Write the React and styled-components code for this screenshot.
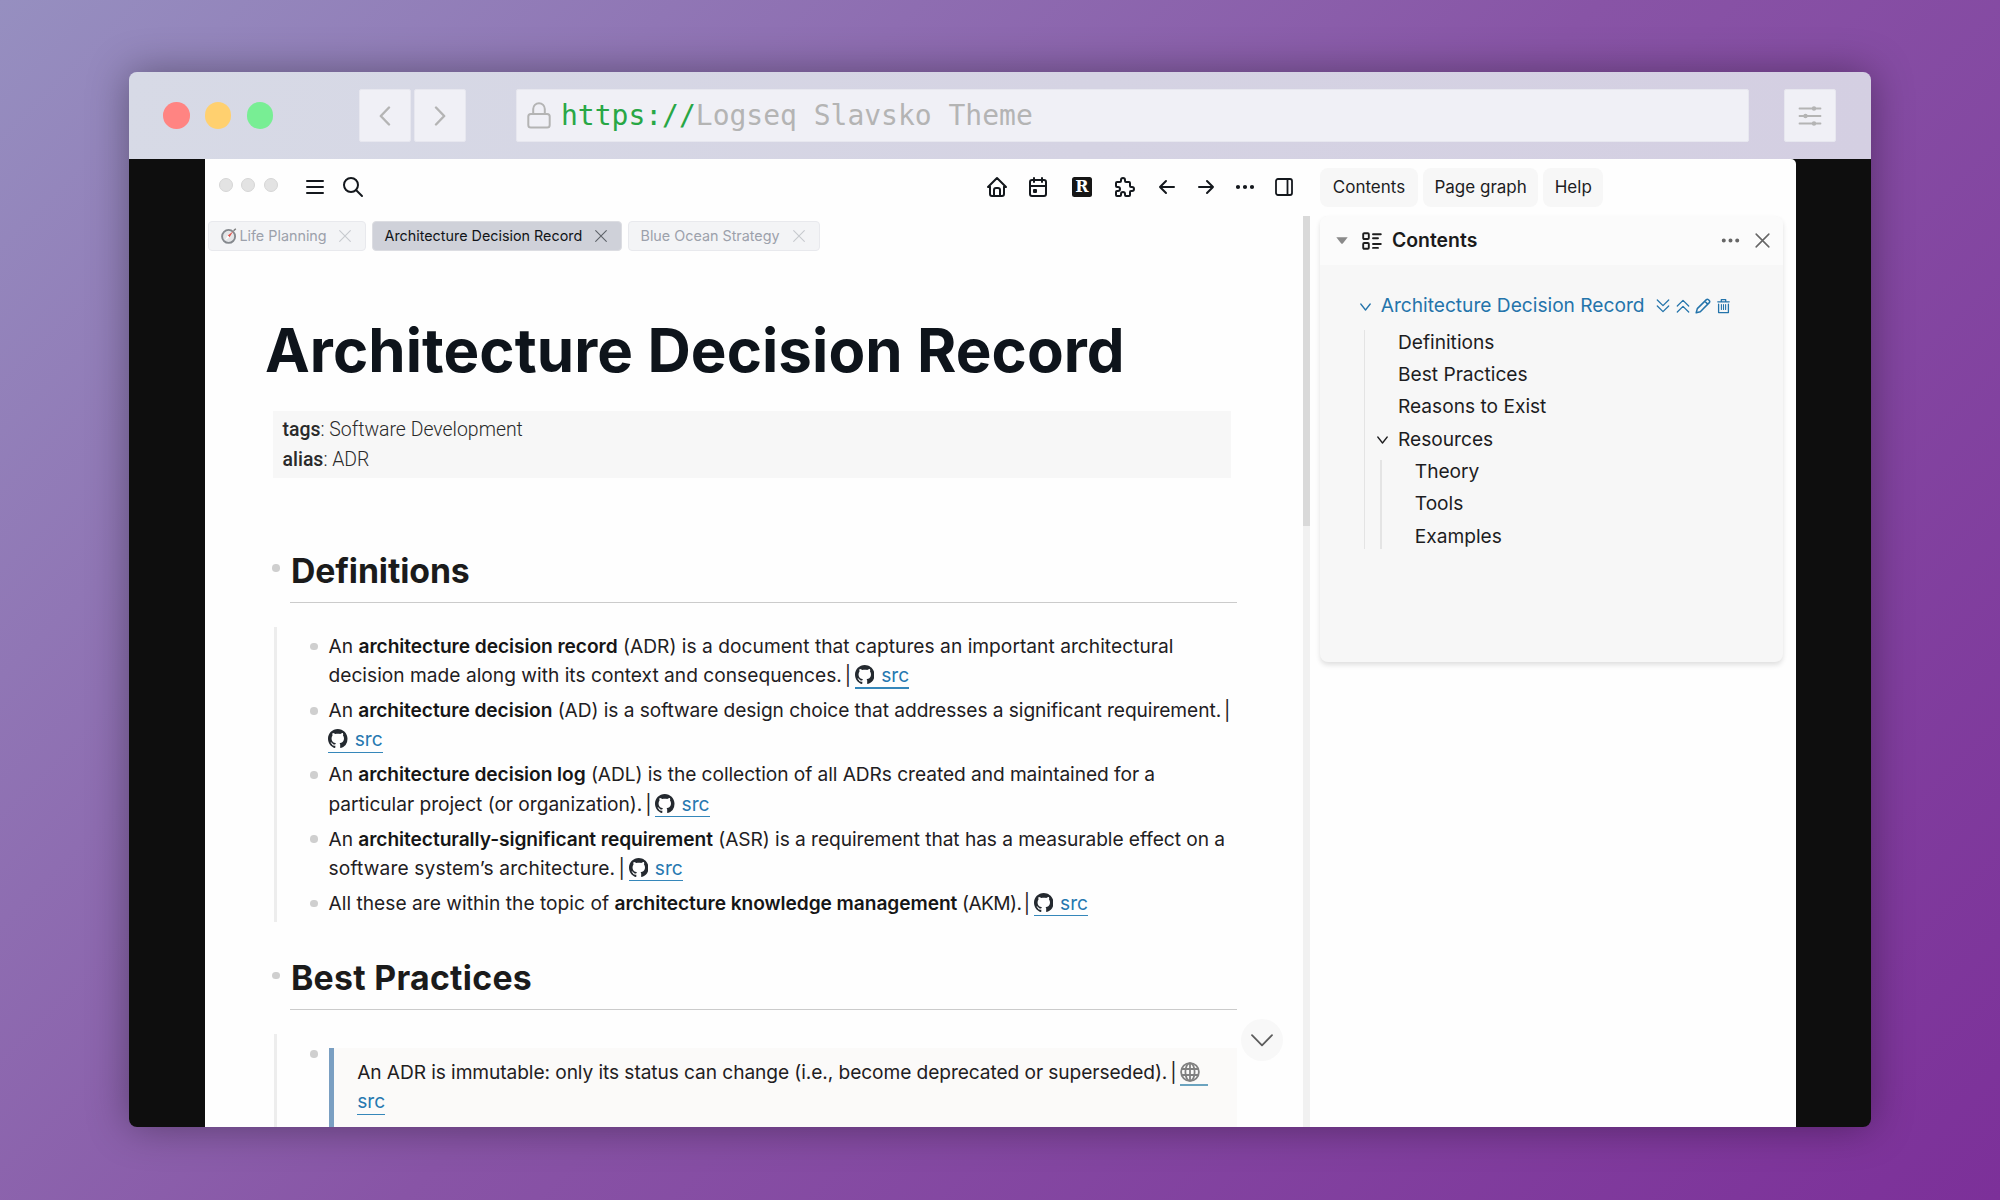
import React from "react";
import styled, { createGlobalStyle } from "styled-components";

const Global = createGlobalStyle`
  * { box-sizing: border-box; }
  html, body { margin: 0; }
  body {
    width: 2000px; height: 1200px; overflow: hidden;
    font-family: Inter, "Liberation Sans", sans-serif;
    color: #1d1d1f;
  }
  svg { display: block; flex: none; }
`;

/* ---------- desktop and browser frame ---------- */
const Desktop = styled.div`
  width: 2000px; height: 1200px;
  padding: 72px 129px 73px;
  background: linear-gradient(135deg, #968fc0 0%, #8854a6 50%, #7c3099 100%);
`;
const BrowserWindow = styled.div`
  height: 1055px;
  display: flex; flex-direction: column;
  border-radius: 8px;
  overflow: hidden;
  box-shadow: 0 0 40px rgba(0, 0, 0, 0.36);
`;
const Chrome = styled.div`
  height: 87px; flex: none;
  display: flex; align-items: center;
  padding: 0 35px 0 34px;
  background: linear-gradient(100deg, #d7dae6, #d5d3e3 55%, #d4cfe2);
`;
const Lights = styled.div`display: flex; gap: 15.4px; width: 196px;`;
const Light = styled.span`
  width: 26.5px; height: 26.5px; border-radius: 50%;
  background: ${(p) => p.$color};
`;
const ChromeBox = styled.div`
  height: 53px; width: 52px;
  display: flex; align-items: center; justify-content: center;
  border-radius: 2px;
  background: #f0f0f6;
  border: 1px solid #e7e7ef;
`;
const NavButtons = styled.div`display: flex; gap: 3px;`;
const Address = styled(ChromeBox)`
  flex: 1; width: auto; justify-content: flex-start;
  margin: 0 35px 0 50px; padding: 0 0 0 9.5px;
  font: 28px "DejaVu Sans Mono", monospace;
  letter-spacing: -0.01px;
  color: #b4b4b4;
  svg { margin-right: 10.5px; }
`;
const Scheme = styled.span`color: #28a745;`;

const Stage = styled.div`
  flex: 1; min-height: 0;
  display: flex;
  padding: 0 75px 0 76px;
  background: #0e0e0e;
`;
const AppWindow = styled.div`
  flex: 1; display: flex; overflow: hidden;
  background: #fefefe;
  border-top-right-radius: 5px;
`;

/* ---------- main pane ---------- */
const Main = styled.div`width: 1105px; flex: none; display: flex; flex-direction: column;`;
const Toolbar = styled.div`
  height: 57px; flex: none;
  display: flex; align-items: center;
  padding: 0 7px 1.4px 14px;
  color: #14181d;
`;
const MacDots = styled.div`display: flex; gap: 8.4px; margin: -3.6px 17.4px 0 0;`;
const MacDot = styled.span`
  width: 14px; height: 14px; border-radius: 50%;
  background: #e3e3e3; border: 1px solid #d6d6d6;
`;
const ToolButton = styled.span`
  width: ${(p) => p.$w || 38.8}px; height: 38px;
  display: flex; align-items: center; justify-content: center;
`;
const Spacer = styled.span`flex: 1;`;
const Readwise = styled.span`
  width: 20px; height: 20px; border-radius: 2.5px;
  background: #161616; color: #fff;
  font: bold 16px/20px "DejaVu Serif", serif;
  text-align: center;
`;
const Scroller = styled.div`flex: 1; display: flex; min-height: 0;`;
const Page = styled.div`flex: 1; min-width: 0; padding-top: 5px; overflow: hidden; position: relative;`;
const Track = styled.div`width: 7.5px; flex: none; background: #f1f1f1;`;
const Thumb = styled.div`height: 310px; background: #d9d9d9;`;

const Tabs = styled.div`display: flex; gap: 5.5px; padding-left: 3px; height: 29.5px;`;
const Tab = styled.div`
  width: ${(p) => p.$w}px; height: 29.5px;
  display: flex; align-items: center; justify-content: space-between;
  padding: 0 12.5px 0 ${(p) => p.$pl || 12}px;
  border-radius: 4px;
  border: 1.5px solid ${(p) => (p.$active ? "#dcdde2" : "#e8e9ed")};
  background: ${(p) => (p.$active ? "#cfd1d9" : "#f3f4f6")};
  color: ${(p) => (p.$active ? "#111418" : "#9ca1ab")};
  font-size: 14.35px; white-space: nowrap;
  svg.close { color: ${(p) => (p.$active ? "#5d6168" : "#c6c9ce")}; }
`;
const TabLabel = styled.span`display: flex; align-items: center; gap: 2.8px;`;

const Title = styled.h1`
  margin: 63.5px 0 0 60px;
  font-size: 60px; line-height: 72px; font-weight: 700;
  letter-spacing: 0.08px;
  color: #0e141b; white-space: nowrap;
`;
const Properties = styled.div`
  margin: 24.8px 0 71.2px 68px; width: 958px; height: 67px;
  padding: 4.7px 9.5px;
  background: #f7f7f7;
  font: 300 19.45px/29.5px Roboto, sans-serif;
  color: #2a2a2a;
  b { font-weight: 500; }
`;
const Section = styled.section`width: 963px; margin-left: 69px;`;
const HeadingRow = styled.div`display: flex;`;
const Bullet = styled.span`
  width: 7.6px; height: 7.6px; border-radius: 50%; flex: none;
  background: #cfcfcf;
  margin: ${(p) => p.$mt}px ${(p) => p.$mr}px 0 ${(p) => p.$ml || 0}px;
`;
const Heading = styled.h2`
  flex: 1; margin: 0; height: 54px;
  padding: 1px 0 0 0.8px;
  font-size: 33.8px; line-height: 42px; font-weight: 700;
  letter-spacing: ${(p) => p.$track || 0}px;
  color: #1b1b1b;
  border-bottom: 1px solid #cbcbcb;
`;
const Children = styled.div`
  margin: 24px 0 34.5px 0.4px;
  padding: ${(p) => p.$pt || 5.1}px 0 3.6px 33px;
  border-left: 3px solid #ededed;
  display: flex; flex-direction: column; gap: 5.8px;
`;
const Block = styled.div`display: flex;`;
const Para = styled.p`
  margin: 0; white-space: nowrap;
  font-size: 19.15px; line-height: 29.2px;
  color: #1f2022;
  b { font-weight: 600; letter-spacing: -0.05px; color: #161616; }
`;
const Run = styled.span`letter-spacing: ${(p) => p.$track}px;`;
const Divider = styled.span`letter-spacing: -0.8px; margin-left: -2.4px;`;
const SourceLink = styled.a`
  display: inline-block; position: relative;
  height: 29.2px; padding-left: ${(p) => (p.$icon ? 26.2 : 0)}px;
  color: #2678b0;
  vertical-align: top;
  &::after {
    content: ""; position: absolute; left: 0; right: 0; bottom: 1.6px;
    height: 1.4px; background: #3587ba;
  }
  svg { position: absolute; left: 0; top: 3.9px; }
`;
const GlobeLink = styled(SourceLink)`
  width: 28px; padding: 0;
  &::after { background: #6ba3bf; }
`;
const Quote = styled.blockquote`
  flex: 1; margin: 0; height: 110px;
  padding: 9.8px 0 0 23px;
  border-left: 5px solid #7a9fc2;
  background: #fbfaf9;
`;
const ScrollDown = styled.div`
  position: absolute; left: 1036px; top: 803px;
  width: 42px; height: 42px; border-radius: 50%;
  display: flex; align-items: center; justify-content: center;
  background: #f8f8f8; color: #5c5c5c;
`;

/* ---------- right sidebar ---------- */
const Sidebar = styled.aside`flex: 1; padding: 0 13px 0 10px;`;
const SidebarNav = styled.div`display: flex; gap: 5.3px; padding: 9px 0 0; height: 57px;`;
const NavPill = styled.span`
  height: 38.7px; width: ${(p) => p.$w}px; border-radius: 8px;
  background: #f7f7f7;
  font-size: 17px; line-height: 38.7px; text-align: center;
`;
const Card = styled.div`
  height: 446px; border-radius: 8px; overflow: hidden;
  background: #f7f7f7;
  box-shadow: 0 3px 5px rgba(0, 0, 0, 0.12);
`;
const CardHeader = styled.div`
  height: 49px; display: flex; align-items: center;
  padding: 0 11px 1px 16px;
  background: #fbfbfb; color: #666;
`;
const HeaderTools = styled.span`display: flex; align-items: center; gap: 11px;`;
const HeaderMark = styled.span`margin: 1px 9.5px 0 14px;`;
const CardTitle = styled.span`
  flex: 1; margin-left: 0.5px;
  font-size: 19.4px; font-weight: 600; color: #1a1a1a;
`;
const Tree = styled.div`padding: 24px 0 0 38px; font-size: 19.15px; line-height: 32.4px;`;
const TreeRoot = styled.div`
  height: 36.5px; display: flex; align-items: flex-start;
  padding-left: 2.3px;
  color: #2474ab;
`;
const TreeActions = styled.span`display: flex; gap: 4px; margin-left: 10px; padding-top: 8.5px;`;
const TreeRow = styled.div`
  height: 32.4px; display: flex;
  padding-left: ${(p) => p.$indent || 0}px;
`;
const Caret = styled.span`width: ${(p) => p.$w}px; padding-top: 13.6px; flex: none;`;
const Branch = styled.div`
  margin-left: ${(p) => p.$ml}px;
  display: flex;
`;
const Guide = styled.span`
  width: 1.4px; margin: 4.5px 0 3.5px; flex: none; background: #e4e4e4;
`;

/* ---------- icons ---------- */
const Icon = ({ size = 24, sw = 2, children, ...rest }) => (
  <svg width={size} height={size} viewBox="0 0 24 24" fill="none" stroke="currentColor"
    strokeWidth={sw} strokeLinecap="round" strokeLinejoin="round" {...rest}>{children}</svg>
);
const Cross = ({ size = 18, sw = 1.6 }) => (
  <Icon size={size} sw={sw} className="close"><path d="M4 4L20 20M20 4L4 20" /></Icon>
);
const Dots = ({ size = 24 }) => (
  <Icon size={size}>
    {[5, 12, 19].map((x) => <circle key={x} cx={x} cy="12" r="1.1" fill="currentColor" />)}
  </Icon>
);
const Chevron = () => (
  <svg width="11" height="8" viewBox="0 0 11 8" fill="none" stroke="currentColor" strokeWidth="1.3"
    strokeLinecap="round" strokeLinejoin="round"><path d="M.8 1L5.5 7L10.2 1" /></svg>
);
const ListMark = () => (
  <svg width="20" height="18" viewBox="0 0 20 18" fill="none" stroke="#1f1f1f" strokeWidth="1.9" strokeLinecap="round">
    <rect x="1.2" y="1.2" width="5.6" height="5.8" rx="1" />
    <rect x="1.2" y="11" width="5.6" height="5.8" rx="1" />
    <path d="M11 2.3H18.8M11 6.2H16M11 12H18.8M11 15.9H16" />
  </svg>
);
const GitHub = () => (
  <svg width="19.5" height="19.5" viewBox="0 0 16 16" fill="#24292f">
    <path d="M8 0C3.58 0 0 3.58 0 8c0 3.54 2.29 6.53 5.47 7.59.4.07.55-.17.55-.38 0-.19-.01-.82-.01-1.49-2.01.37-2.53-.49-2.69-.94-.09-.23-.48-.94-.82-1.13-.28-.15-.68-.52-.01-.53.63-.01 1.08.58 1.23.82.72 1.21 1.87.87 2.33.66.07-.52.28-.87.51-1.07-1.78-.2-3.64-.89-3.64-3.95 0-.87.31-1.59.82-2.15-.08-.2-.36-1.02.08-2.12 0 0 .67-.21 2.2.82.64-.18 1.32-.27 2-.27.68 0 1.36.09 2 .27 1.53-1.04 2.2-.82 2.2-.82.44 1.1.16 1.92.08 2.12.51.56.82 1.27.82 2.15 0 3.07-1.87 3.75-3.65 3.95.29.25.54.73.54 1.48 0 1.07-.01 1.93-.01 2.2 0 .21.15.46.55.38A8.013 8.013 0 0016 8c0-4.42-3.58-8-8-8z" />
  </svg>
);
const Globe = () => (
  <svg width="20" height="20" viewBox="0 0 20 20" fill="none" stroke="#808080" strokeWidth="1.8">
    <circle cx="10" cy="10" r="8.9" />
    <ellipse cx="10" cy="10" rx="4.6" ry="8.9" />
    <path d="M10 1V19M1.8 7H18.2M1.8 13H18.2" />
  </svg>
);
const Compass = () => (
  <svg width="16" height="16" viewBox="0 0 16 16" fill="none">
    <circle cx="7.6" cy="8.4" r="6.5" fill="#e4e6e8" stroke="#85898e" strokeWidth="1.9" />
    <path d="M12.2 3.2L8.5 9.2L6.8 7.6Z" fill="#e2564d" />
    <path d="M3.6 12.8L8.5 9.2L6.8 7.6Z" fill="#fff" />
    <path d="M12.6 2.8L14.8 .8" stroke="#777" strokeWidth="1.4" />
  </svg>
);
const DoubleChevron = ({ up }) => (
  <svg width="16" height="16" viewBox="0 0 16 16" fill="none" stroke="currentColor" strokeWidth="1.3"
    strokeLinecap="round" strokeLinejoin="round">
    <path d={up ? "M2.3 8L8 2.4L13.7 8M2.3 14L8 8.4L13.7 14" : "M2.3 2L8 7.6L13.7 2M2.3 8L8 13.6L13.7 8"} />
  </svg>
);
const Pencil = () => (
  <svg width="16" height="16" viewBox="0 0 16 16" fill="none" stroke="currentColor" strokeWidth="1.5" strokeLinejoin="round">
    <path d="M1.2 14.8L2.3 10.6L11.4 1.6Q12.4 .8 13.5 1.8L14.2 2.5Q15.2 3.6 14.3 4.6L5.3 13.7ZM9.8 3.2L12.7 6.1" />
  </svg>
);
const Trash = () => (
  <svg width="16" height="16" viewBox="0 0 16 16" fill="none" stroke="currentColor" strokeWidth="1.3" strokeLinecap="round" strokeLinejoin="round">
    <path d="M2.8 3.8H14.2M6.3 3.4V1.7H10.7V3.4M3.6 6.2V14.6H13.4V6.2" />
    <path d="M6.4 6.6V11.4M8.5 6.6V11.4M10.6 6.6V11.4" strokeWidth="1.1" />
  </svg>
);
const Angle = ({ d }) => (
  <svg width="12" height="20" viewBox="0 0 12 20" fill="none" stroke="#b4b4b4" strokeWidth="2.4"
    strokeLinecap="round" strokeLinejoin="round"><path d={d} /></svg>
);

const Src = ({ bare }) => (
  <SourceLink $icon={!bare}>{!bare && <GitHub />}src</SourceLink>
);
const Bar = () => <Divider>| </Divider>;
const Item = ({ children }) => (
  <Block><Bullet $mt={10.8} $mr={10.5} /><Para>{children}</Para></Block>
);

export default function App() {
  return (
    <>
      <Global />
      <Desktop>
        <BrowserWindow>
          <Chrome>
            <Lights>
              <Light $color="#ff8482" /><Light $color="#ffd06f" /><Light $color="#78ee94" />
            </Lights>
            <NavButtons>
              <ChromeBox><Angle d="M10 1.5L1.8 10L10 18.5" /></ChromeBox>
              <ChromeBox><Angle d="M2 1.5L10.2 10L2 18.5" /></ChromeBox>
            </NavButtons>
            <Address>
              <svg width="24" height="27" viewBox="0 0 24 27" fill="none" stroke="#b4b4b4" strokeWidth="2">
                <rect x="1.3" y="12" width="21.4" height="13.6" rx="2.5" />
                <path d="M6.2 12V7a5.8 5.8 0 0 1 11.6 0V12" />
              </svg>
              <span><Scheme>https://</Scheme>Logseq Slavsko Theme</span>
            </Address>
            <ChromeBox>
              <svg width="24" height="20" viewBox="0 0 24 20" fill="#b4b4b4" stroke="#b4b4b4" strokeWidth="1.8" strokeLinecap="round">
                <path d="M1.5 2.5H22.5M1.5 10H22.5M1.5 17.5H22.5" />
                <circle cx="16" cy="2.5" r="1.3" /><circle cx="7.5" cy="10" r="1.3" /><circle cx="16" cy="17.5" r="1.3" />
              </svg>
            </ChromeBox>
          </Chrome>
          <Stage>
            <AppWindow>
              <Main>
                <Toolbar>
                  <MacDots><MacDot /><MacDot /><MacDot /></MacDots>
                  <ToolButton><Icon><path d="M4 6H20M4 12H20M4 18H20" /></Icon></ToolButton>
                  <ToolButton><Icon><circle cx="10" cy="10" r="7" /><path d="M21 21L15 15" /></Icon></ToolButton>
                  <Spacer />
                  <ToolButton $w={37}>
                    <Icon><path d="M5 12H3L12 3L21 12H19" /><path d="M5 12v7a2 2 0 0 0 2 2h10a2 2 0 0 0 2-2v-7" /><path d="M9 21v-6a2 2 0 0 1 2-2h2a2 2 0 0 1 2 2v6" /></Icon>
                  </ToolButton>
                  <ToolButton $w={45.6}>
                    <Icon><rect x="4" y="5" width="16" height="16" rx="2" /><path d="M16 3V7M8 3V7M4 11H20M8 15h2v2h-2z" /></Icon>
                  </ToolButton>
                  <ToolButton $w={41.6}><Readwise>R</Readwise></ToolButton>
                  <ToolButton $w={45.2}>
                    <Icon><path d="M4 7h3a1 1 0 0 0 1 -1v-1a2 2 0 0 1 4 0v1a1 1 0 0 0 1 1h3a1 1 0 0 1 1 1v3a1 1 0 0 0 1 1h1a2 2 0 0 1 0 4h-1a1 1 0 0 0 -1 1v3a1 1 0 0 1 -1 1h-3a1 1 0 0 1 -1 -1v-1a2 2 0 0 0 -4 0v1a1 1 0 0 1 -1 1h-3a1 1 0 0 1 -1 -1v-3a1 1 0 0 1 1 -1h1a2 2 0 0 0 0 -4h-1a1 1 0 0 1 -1 -1v-3a1 1 0 0 1 1 -1" /></Icon>
                  </ToolButton>
                  <ToolButton><Icon><path d="M5 12H19M5 12L11 18M5 12L11 6" /></Icon></ToolButton>
                  <ToolButton><Icon><path d="M5 12H19M13 18L19 12M13 6L19 12" /></Icon></ToolButton>
                  <ToolButton><Dots /></ToolButton>
                  <ToolButton><Icon sw={1.8}><rect x="4" y="4" width="16" height="16" rx="2" /><path d="M15.5 4V20" /></Icon></ToolButton>
                </Toolbar>
                <Scroller>
                  <Page>
                    <Tabs>
                      <Tab $w={158} $pl={11.6}><TabLabel><Compass />Life Planning</TabLabel><Cross size={16} /></Tab>
                      <Tab $w={250.5} $active>Architecture Decision Record<Cross size={16} /></Tab>
                      <Tab $w={192.5}>Blue Ocean Strategy<Cross size={16} /></Tab>
                    </Tabs>
                    <Title>Architecture Decision Record</Title>
                    <Properties>
                      <div><b>tags</b>: Software Development</div>
                      <div><b>alias</b>: ADR</div>
                    </Properties>
                    <Section>
                      <HeadingRow>
                        <Bullet $mt={15.5} $mr={10.5} $ml={-2} />
                        <Heading $track={-0.1}>Definitions</Heading>
                      </HeadingRow>
                      <Children>
                        <Item>
                          <Run $track={0.035}>An <b>architecture decision record</b> (ADR) is a document that captures an important architectural</Run><br />
                          <Run $track={0.02}>decision made along with its context and consequences. </Run><Bar /><Src />
                        </Item>
                        <Item>
                          <Run $track={-0.06}>An <b>architecture decision</b> (AD) is a software design choice that addresses a significant requirement. </Run><Bar /><br />
                          <Src />
                        </Item>
                        <Item>
                          <Run $track={-0.06}>An <b>architecture decision log</b> (ADL) is the collection of all ADRs created and maintained for a</Run><br />
                          <Run $track={-0.03}>particular project (or organization). </Run><Bar /><Src />
                        </Item>
                        <Item>
                          <Run $track={-0.05}>An <b>architecturally-significant requirement</b> (ASR) is a requirement that has a measurable effect on a</Run><br />
                          <Run $track={0.16}>software system’s architecture. </Run><Bar /><Src />
                        </Item>
                        <Item>
                          <Run $track={0.03}>All these are within the topic of </Run><b>architecture knowledge management</b><Run $track={-0.6}> (AKM). </Run><Bar /><Src />
                        </Item>
                      </Children>
                    </Section>
                    <Section>
                      <HeadingRow>
                        <Bullet $mt={15.5} $mr={10.5} $ml={-2} />
                        <Heading $track={0.3}>Best Practices</Heading>
                      </HeadingRow>
                      <Children $pt={14.3}>
                        <Block>
                          <Bullet $mt={1.5} $mr={11.2} />
                          <Quote>
                            <Para>
                              <Run $track={-0.08}>An ADR is immutable: only its status can change (i.e., become deprecated or superseded). </Run><Bar />
                              <GlobeLink><Globe /></GlobeLink><br />
                              <Src bare />
                            </Para>
                          </Quote>
                        </Block>
                      </Children>
                    </Section>
                    <ScrollDown>
                      <svg width="22" height="13" viewBox="0 0 22 13" fill="none" stroke="currentColor" strokeWidth="1.8" strokeLinecap="round" strokeLinejoin="round"><path d="M1 1.2L11 11.4L21 1.2" /></svg>
                    </ScrollDown>
                  </Page>
                  <Track><Thumb /></Track>
                </Scroller>
              </Main>
              <Sidebar>
                <SidebarNav>
                  <NavPill $w={98}>Contents</NavPill>
                  <NavPill $w={114.7}>Page graph</NavPill>
                  <NavPill $w={60}>Help</NavPill>
                </SidebarNav>
                <Card>
                  <CardHeader>
                    <svg width="12" height="7" viewBox="0 0 12 7" fill="#8a8a8a"><path d="M.3 .3H11.7L6.8 6.5Q6 7.2 5.2 6.5Z" /></svg>
                    <HeaderMark><ListMark /></HeaderMark>
                    <CardTitle>Contents</CardTitle>
                    <HeaderTools><Dots size={23} /><Cross size={19} sw={2} /></HeaderTools>
                  </CardHeader>
                  <Tree>
                    <TreeRoot>
                      <Caret $w={20.4}><Chevron /></Caret>
                      <span>Architecture Decision Record</span>
                      <TreeActions>
                        <DoubleChevron />
                        <DoubleChevron up />
                        <Pencil />
                        <Trash />
                      </TreeActions>
                    </TreeRoot>
                    <Branch $ml={6}>
                      <Guide />
                      <div>
                        <TreeRow $indent={32.6}>Definitions</TreeRow>
                        <TreeRow $indent={32.6}>Best Practices</TreeRow>
                        <TreeRow $indent={32.6}>Reasons to Exist</TreeRow>
                        <TreeRow $indent={11.4}><Caret $w={21.2}><Chevron /></Caret>Resources</TreeRow>
                        <Branch $ml={15}>
                          <Guide />
                          <div>
                            <TreeRow $indent={33}>Theory</TreeRow>
                            <TreeRow $indent={33}>Tools</TreeRow>
                            <TreeRow $indent={33}>Examples</TreeRow>
                          </div>
                        </Branch>
                      </div>
                    </Branch>
                  </Tree>
                </Card>
              </Sidebar>
            </AppWindow>
          </Stage>
        </BrowserWindow>
      </Desktop>
    </>
  );
}
